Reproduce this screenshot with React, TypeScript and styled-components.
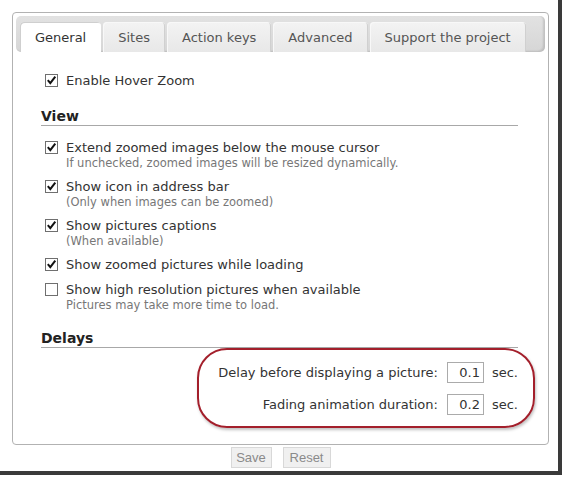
import React from "react";
import styled, { createGlobalStyle } from "styled-components";

const Global = createGlobalStyle`
  html, body { margin: 0; padding: 0; background: #fff; }
  body { font-family: "DejaVu Sans", Verdana, sans-serif; }
`;

const Frame = styled.div`
  width: 562px;
  height: 475px;
  box-sizing: border-box;
  padding: 12px 10px 0 12px;
  background: #fff;
  border-right: 4px solid #3a3a3a;
  border-bottom: 4px solid #3a3a3a;
  display: flex;
  flex-direction: column;
  align-items: stretch;
`;

const Panel = styled.div`
  width: 537px;
  box-sizing: border-box;
  border: 1px solid #b2b2b2;
  border-radius: 4px;
  padding: 3px 3px 0 3px;
`;

const TabBar = styled.div`
  height: 36px;
  box-sizing: border-box;
  padding: 6px 0 0 4px;
  display: flex;
  gap: 2px;
  align-items: flex-end;
  border-radius: 5px;
  background: linear-gradient(180deg, #e2e2e2 0%, #d6d6d6 100%);
  box-shadow: inset -2px -1px 2px rgba(0, 0, 0, 0.12);
`;

const Tab = styled.div<{ $active?: boolean }>`
  height: 30px;
  box-sizing: border-box;
  padding: 0 15px;
  display: flex;
  align-items: center;
  font-size: 13px;
  color: ${(p) => (p.$active ? "#333" : "#555")};
  border-radius: 4px 4px 0 0;
  background: ${(p) =>
    p.$active ? "#fff" : "linear-gradient(180deg, #f3f3f3 0%, #e8e8e8 100%)"};
  box-shadow: ${(p) =>
    p.$active
      ? "inset 1px 1px 0 #cfcfcf"
      : "inset 1px 1px 0 #f8f8f8, inset -1px 0 0 #d0d0d0"};
`;

const Content = styled.div`
  padding: 21px 27px 16px 25px;
  display: flex;
  flex-direction: column;
`;

const Section = styled.div<{ $top: number }>`
  margin-top: ${(p) => p.$top}px;
  display: flex;
  flex-direction: column;
`;

const Heading = styled.div`
  font-size: 14px;
  font-weight: bold;
  color: #222;
  line-height: 18px;
  border-bottom: 1px solid #a8a8a8;
`;

const List = styled.div<{ $top: number }>`
  margin-top: ${(p) => p.$top}px;
  padding-left: 4px;
  display: flex;
  flex-direction: column;
  gap: 9px;
`;

const Option = styled.label`
  display: grid;
  grid-template-columns: 13px 1fr;
  column-gap: 8px;
  align-items: start;
`;

const Box = styled.span`
  width: 13px;
  height: 13px;
  box-sizing: border-box;
  margin-top: 1px;
  border: 1px solid #6f6f6f;
  background: #fff;
  display: flex;
  align-items: center;
  justify-content: center;
`;

const Texts = styled.div`
  display: flex;
  flex-direction: column;
`;

const Main = styled.span`
  font-size: 13px;
  line-height: 16px;
  color: #333;
`;

const Sub = styled.span`
  font-size: 11.5px;
  line-height: 14px;
  color: #777;
`;

const DelayBox = styled.div`
  align-self: flex-end;
  margin-right: -17px;
  display: flex;
  flex-direction: column;
  align-items: flex-end;
  gap: 11px;
  padding: 12px 15px 11px 19px;
  border: 2px solid #a31f2b;
  border-radius: 30px;
  box-shadow: 1px 2px 3px rgba(0, 0, 0, 0.25);
`;

const DelayRow = styled.div`
  display: flex;
  align-items: center;
  font-size: 13px;
  color: #333;
`;

const NumInput = styled.div`
  width: 37px;
  height: 21px;
  box-sizing: border-box;
  margin: 0 8px 0 9px;
  border: 1px solid #ababab;
  padding-right: 3px;
  display: flex;
  align-items: center;
  justify-content: flex-end;
  font-size: 13px;
  color: #333;
`;

const Buttons = styled.div`
  margin-top: 2px;
  width: 537px;
  display: flex;
  justify-content: center;
  gap: 11px;
`;

const Button = styled.div<{ $w: number }>`
  width: ${(p) => p.$w}px;
  height: 21px;
  box-sizing: border-box;
  border: 1px solid #d8d8d8;
  background: #f0f0f0;
  display: flex;
  align-items: center;
  justify-content: center;
  font-family: "Liberation Sans", Arial, sans-serif;
  font-size: 13px;
  color: #8a8a8a;
`;

const Check = () => (
  <svg width="11" height="11" viewBox="0 0 11 11">
    <path d="M1.8 5.2 L4.3 8.2 L9.3 1.6" fill="none" stroke="#111" strokeWidth="2" />
  </svg>
);

type Opt = { label: string; sub?: string; checked: boolean };

const viewOptions: Opt[] = [
  { label: "Extend zoomed images below the mouse cursor", sub: "If unchecked, zoomed images will be resized dynamically.", checked: true },
  { label: "Show icon in address bar", sub: "(Only when images can be zoomed)", checked: true },
  { label: "Show pictures captions", sub: "(When available)", checked: true },
  { label: "Show zoomed pictures while loading", checked: true },
  { label: "Show high resolution pictures when available", sub: "Pictures may take more time to load.", checked: false },
];

const OptionRow = ({ o }: { o: Opt }) => (
  <Option>
    <Box>{o.checked && <Check />}</Box>
    <Texts>
      <Main>{o.label}</Main>
      {o.sub && <Sub>{o.sub}</Sub>}
    </Texts>
  </Option>
);

export default function App() {
  return (
    <>
      <Global />
      <Frame>
        <Panel>
          <TabBar>
            <Tab $active>General</Tab>
            <Tab>Sites</Tab>
            <Tab>Action keys</Tab>
            <Tab>Advanced</Tab>
            <Tab>Support the project</Tab>
          </TabBar>
          <Content>
            <List $top={0}>
              <OptionRow o={{ label: "Enable Hover Zoom", checked: true }} />
            </List>
            <Section $top={18}>
              <Heading>View</Heading>
              <List $top={14}>
                {viewOptions.map((o) => (
                  <OptionRow key={o.label} o={o} />
                ))}
              </List>
            </Section>
            <Section $top={17}>
              <Heading>Delays</Heading>
              <DelayBox>
                <DelayRow>
                  Delay before displaying a picture:<NumInput>0.1</NumInput>sec.
                </DelayRow>
                <DelayRow>
                  Fading animation duration:<NumInput>0.2</NumInput>sec.
                </DelayRow>
              </DelayBox>
            </Section>
          </Content>
        </Panel>
        <Buttons>
          <Button $w={41}>Save</Button>
          <Button $w={48}>Reset</Button>
        </Buttons>
      </Frame>
    </>
  );
}
